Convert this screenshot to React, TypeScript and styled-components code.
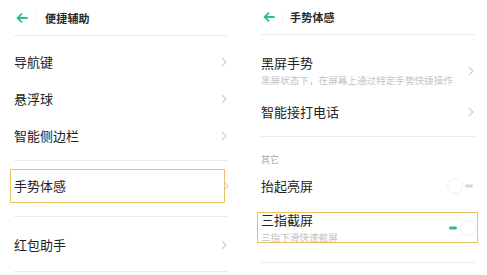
import React from 'react';
import styled, { createGlobalStyle } from 'styled-components';

const GlobalStyle = createGlobalStyle`
  html, body {
    margin: 0;
    padding: 0;
    background: #fff;
  }
  body {
    font-family: "Noto Sans CJK SC", "Noto Sans", sans-serif;
    color: #222;
  }
`;

const Page = styled.div`
  display: flex;
  width: 487px;
  height: 275px;
  overflow: hidden;
  background: #fff;
`;

const Panel = styled.div<{ width: number; padLeft: number; padRight: number }>`
  width: ${({ width }) => width}px;
  padding: 0 ${({ padRight }) => padRight}px 0 ${({ padLeft }) => padLeft}px;
  box-sizing: border-box;
  display: flex;
  flex-direction: column;
`;

const Header = styled.div<{ height: number }>`
  display: flex;
  align-items: center;
  height: ${({ height }) => height}px;
  border-bottom: 1px solid #ececec;
  padding-left: 2px;
`;

const Back = styled.span`
  display: flex;
  align-items: center;
  width: 12px;
`;

const Sep = styled.span<{ gap: number }>`
  width: 1px;
  height: 11px;
  background: #f2f2f2;
  margin: 0 ${({ gap }) => gap}px;
`;

const HeaderTitle = styled.span`
  font-size: 11px;
  font-weight: 700;
  color: #2a2a2a;
  letter-spacing: 0.2px;
`;

const Section = styled.div<{ top: number; bottom: number; divider?: boolean }>`
  padding: ${({ top }) => top}px 0 ${({ bottom }) => bottom}px;
  border-bottom: ${({ divider }) => (divider ? '1px solid #ececec' : 'none')};
`;

const Row = styled.div<{ height: number; highlight?: boolean; right?: number; gapTop?: number }>`
  display: flex;
  align-items: center;
  justify-content: space-between;
  height: ${({ height }) => height}px;
  margin-top: ${({ gapTop = 0 }) => gapTop}px;
  box-sizing: border-box;
  ${({ highlight, right = 0 }) =>
    highlight
      ? `
    border: 1.5px solid #ecc25e;
    margin-left: -4px;
    margin-right: ${-right}px;
    padding-left: 3px;
  `
      : ''}
`;

const RowText = styled.div`
  display: flex;
  flex-direction: column;
  justify-content: center;
`;

const Label = styled.span`
  font-size: 13px;
  line-height: 16px;
  color: #222;
`;

const Sub = styled.span`
  font-size: 9.6px;
  line-height: 13px;
  color: #c4c4c4;
  margin-top: 3px;
  white-space: nowrap;
`;

const Caption = styled.div`
  font-size: 9px;
  color: #a8a8a8;
  height: 22px;
  display: flex;
  align-items: center;
`;

const Chevron = styled.span<{ shift?: number }>`
  display: flex;
  align-items: center;
  margin-right: ${({ shift = 1 }) => shift}px;
`;

const Switch = styled.span<{ shift?: number }>`
  display: flex;
  align-items: center;
  margin-right: ${({ shift = 0 }) => shift}px;
`;

const BackArrow = () => (
  <svg width="12" height="10" viewBox="0 0 12 10">
    <path
      d="M11 5H2M5.5 1.2 1.6 5l3.9 3.8"
      fill="none"
      stroke="#2bbf86"
      strokeWidth="1.8"
      strokeLinecap="round"
      strokeLinejoin="round"
    />
  </svg>
);

const Arrow = ({ shift }: { shift?: number }) => (
  <Chevron shift={shift}>
    <svg width="6" height="10" viewBox="0 0 6 10">
      <path d="M1 1l4 4-4 4" fill="none" stroke="#cfcfcf" strokeWidth="1.1" />
    </svg>
  </Chevron>
);

const Toggle = ({ on, shift }: { on: boolean; shift?: number }) => (
  <Switch shift={shift}>
    <svg width="28" height="18" viewBox="0 0 28 18">
      {on ? (
        <>
          <rect x="1" y="7.6" width="8" height="2.8" rx="1.4" fill="#2bbf7e" />
          <circle cx="20" cy="9" r="7.4" fill="#fff" stroke="#f0f0f0" strokeWidth="1" />
        </>
      ) : (
        <>
          <circle cx="8" cy="9" r="7.4" fill="#fff" stroke="#eeeeee" strokeWidth="1" />
          <rect x="18" y="7.6" width="8" height="2.8" rx="1.4" fill="#d4d4d4" />
        </>
      )}
    </svg>
  </Switch>
);

const App = () => {
  return (
    <Page>
      <GlobalStyle />
      <Panel width={245} padLeft={14} padRight={17}>
        <Header height={35}>
          <Back>
            <BackArrow />
          </Back>
          <Sep gap={8} />
          <HeaderTitle>便捷辅助</HeaderTitle>
        </Header>
        <Section top={7} bottom={6} divider>
          {['导航键', '悬浮球', '智能侧边栏'].map((label) => (
            <Row key={label} height={37}>
              <Label>{label}</Label>
              <Arrow />
            </Row>
          ))}
        </Section>
        <Section top={8} bottom={13} divider>
          <Row height={34} highlight right={-3}>
            <Label>手势体感</Label>
            <Arrow shift={-5} />
          </Row>
        </Section>
        <Section top={10} bottom={8} divider>
          <Row height={36}>
            <Label>红包助手</Label>
            <Arrow />
          </Row>
        </Section>
      </Panel>
      <Panel width={242} padLeft={16} padRight={12}>
        <Header height={34}>
          <Back>
            <BackArrow />
          </Back>
          <Sep gap={7} />
          <HeaderTitle>手势体感</HeaderTitle>
        </Header>
        <Section top={13} bottom={6} divider>
          <Row height={46}>
            <RowText>
              <Label>黑屏手势</Label>
              <Sub>黑屏状态下，在屏幕上通过特定手势快捷操作</Sub>
            </RowText>
            <Arrow />
          </Row>
          <Row height={36}>
            <Label>智能接打电话</Label>
            <Arrow />
          </Row>
        </Section>
        <Section top={11} bottom={19} divider>
          <Caption>其它</Caption>
          <Row height={32}>
            <Label>抬起亮屏</Label>
            <Toggle on={false} />
          </Row>
          <Row height={31} highlight right={3} gapTop={10}>
            <RowText>
              <Label>三指截屏</Label>
              <Sub>三指下滑快速截屏</Sub>
            </RowText>
            <Toggle on shift={1.5} />
          </Row>
        </Section>
      </Panel>
    </Page>
  );
};

export default App;
